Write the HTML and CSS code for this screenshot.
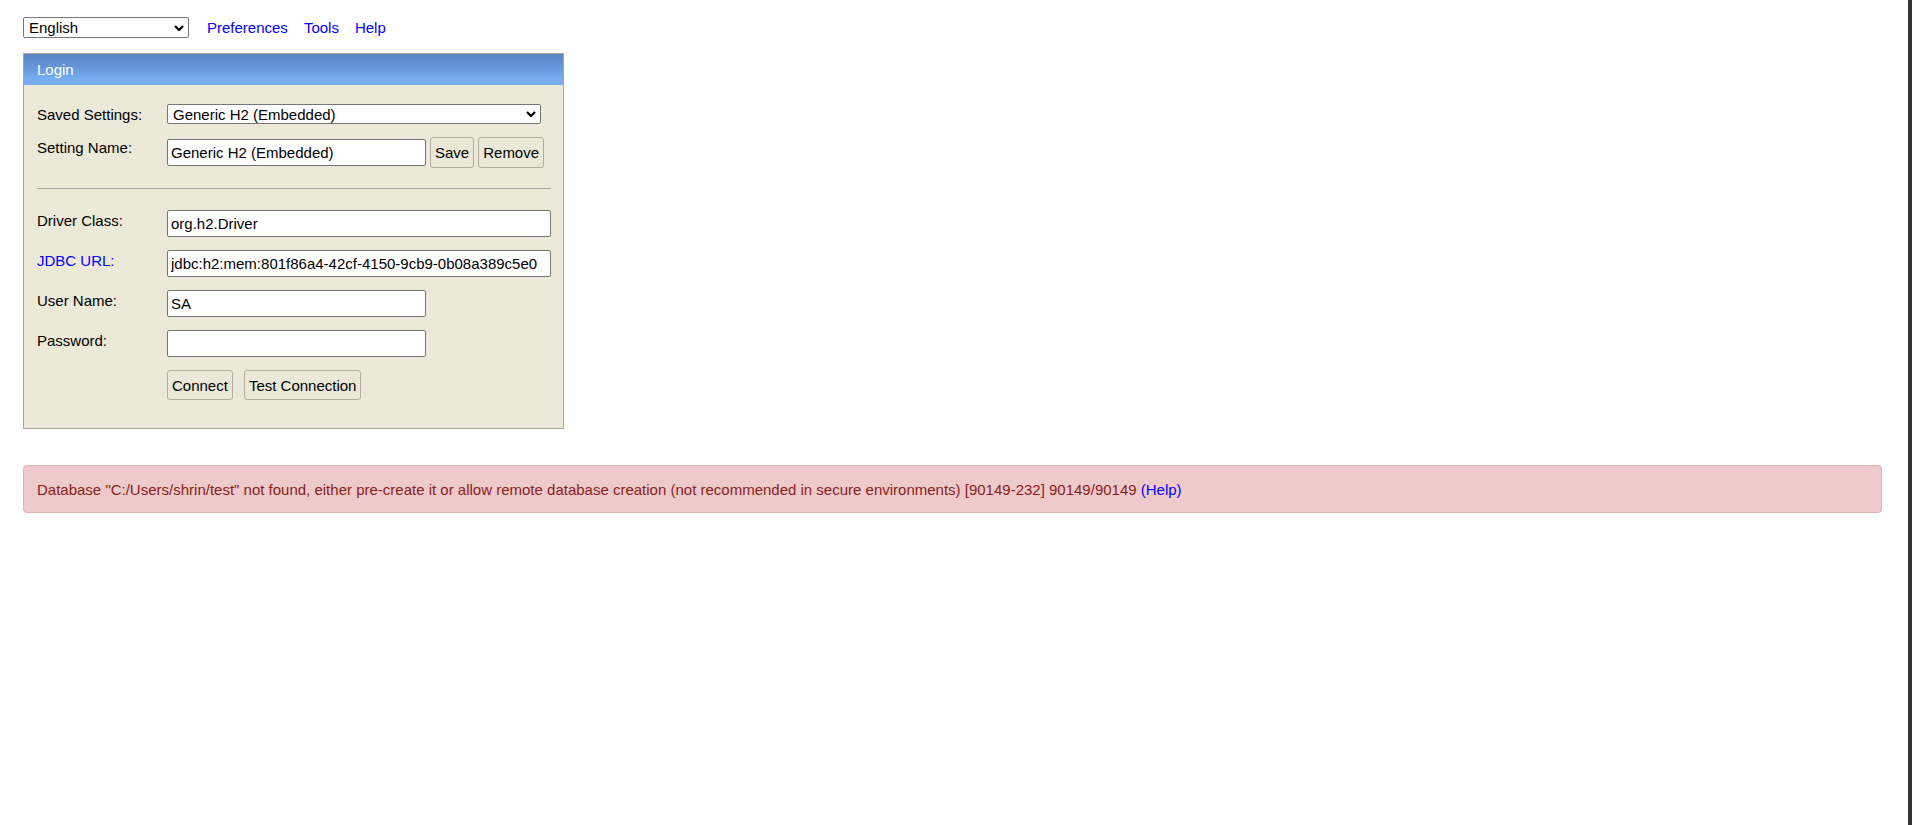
FILE: index.html
```html
<!DOCTYPE html>
<html lang="en">
<head>
<meta charset="utf-8">
<title>H2 Console</title>
<link rel="stylesheet" href="styles.css">
</head>
<body>
<div class="page">
  <div class="toolbar">
    <div class="select-wrap lang">
      <select class="select"><option>English</option></select>
      <svg class="chev" viewBox="0 0 10 6" aria-hidden="true"><path d="M1 1 L5 5 L9 1"/></svg>
    </div>
    <a class="link first" href="#">Preferences</a>
    <a class="link" href="#">Tools</a>
    <a class="link" href="#">Help</a>
  </div>

  <div class="login">
    <div class="login-head">Login</div>
    <div class="login-body">
      <div class="lbl">Saved Settings:</div>
      <div class="select-wrap saved">
        <select class="select"><option>Generic H2 (Embedded)</option></select>
        <svg class="chev" viewBox="0 0 10 6" aria-hidden="true"><path d="M1 1 L5 5 L9 1"/></svg>
      </div>

      <div class="lbl">Setting Name:</div>
      <div class="ctrls">
        <input class="input short" type="text" value="Generic H2 (Embedded)">
        <button class="btn tall">Save</button>
        <button class="btn tall">Remove</button>
      </div>

      <hr class="sep">

      <div class="lbl">Driver Class:</div>
      <div><input class="input wide" type="text" value="org.h2.Driver"></div>

      <div class="lbl"><a class="lbl-link" href="#">JDBC URL:</a></div>
      <div><input class="input wide" type="text" value="jdbc:h2:mem:801f86a4-42cf-4150-9cb9-0b08a389c5e0"></div>

      <div class="lbl">User Name:</div>
      <div><input class="input short" type="text" value="SA"></div>

      <div class="lbl">Password:</div>
      <div><input class="input short" type="password" value=""></div>

      <div class="actions">
        <button class="btn">Connect</button>
        <button class="btn">Test Connection</button>
      </div>
    </div>
  </div>

  <div class="error">Database "C:/Users/shrin/test" not found, either pre-create it or allow remote database creation (not recommended in secure environments) [90149-232] 90149/90149 <a class="err-link" href="#">(Help)</a></div>
</div>
<div class="edge"></div>
</body>
</html>
```

FILE: styles.css
```css
html, body {
  margin: 0;
  padding: 0;
  height: 100%;
}

body {
  display: flex;
  background: #ffffff;
  font-family: "Liberation Sans", Arial, sans-serif;
  font-size: 15px;
  color: #000000;
}

.page {
  flex: 1;
  padding: 17px 26px 0 23px;
}

.edge {
  flex: none;
  width: 4px;
  background: #333333;
}

/* top toolbar */
.toolbar {
  display: flex;
  align-items: center;
  height: 21px;
}

.link {
  color: #0000ff;
  text-decoration: none;
  margin-left: 16px;
  line-height: 17px;
}

.link.first {
  margin-left: 18px;
}

.select-wrap {
  position: relative;
  display: block;
}

.select {
  -webkit-appearance: none;
  appearance: none;
  display: block;
  box-sizing: border-box;
  margin: 0;
  padding: 0 0 0 5px;
  font: inherit;
  color: #000000;
  background: #ffffff;
  border: 1px solid #767676;
  border-radius: 2px;
}

.lang .select {
  width: 166px;
  height: 21px;
}

.saved {
  justify-self: start;
}

.saved .select {
  width: 374px;
  height: 20px;
}

.chev {
  position: absolute;
  right: 5px;
  top: 50%;
  width: 10px;
  height: 6px;
  margin-top: -3px;
  pointer-events: none;
  fill: none;
  stroke: #000000;
  stroke-width: 2.2;
}

/* login panel */
.login {
  box-sizing: border-box;
  width: 541px;
  margin-top: 15px;
  border: 1px solid #aca899;
  background: #ece9d8;
}

.login-head {
  height: 31px;
  line-height: 31px;
  padding-left: 13px;
  color: #ffffff;
  background: linear-gradient(#5a84c4 0%, #6697da 45%, #76aef1 80%, #75adf0 100%);
}

.login-body {
  display: grid;
  grid-template-columns: 130px 384px;
  row-gap: 13px;
  padding: 19px 12px 28px 13px;
}

.lbl {
  padding-top: 2px;
  line-height: 17px;
}

.lbl-link {
  color: #0000ff;
  text-decoration: none;
}

.ctrls {
  display: flex;
  align-items: center;
  gap: 4px;
}

.input {
  box-sizing: border-box;
  height: 27px;
  margin: 0;
  padding: 0 3px;
  font: inherit;
  color: #000000;
  background: #ffffff;
  border: 1px solid #767676;
  border-radius: 2px;
  display: block;
}

.input.wide {
  width: 384px;
}

.input.short {
  width: 259px;
}

.btn {
  box-sizing: border-box;
  height: 30px;
  margin: 0;
  padding: 0 4px;
  font: inherit;
  color: #000000;
  background: #ebe8d8;
  border: 1px solid #b1ae9f;
  border-radius: 3px;
}

.btn.tall {
  height: 31px;
}

.sep {
  grid-column: 1 / -1;
  height: 1px;
  margin: 7px 0 8px;
  border: 0;
  background: #a3a3a3;
}

.actions {
  grid-column: 2;
  display: flex;
  gap: 11px;
}

/* error message */
.error {
  margin-top: 36px;
  padding: 15px 13px 14px;
  line-height: 17px;
  color: #8b1c1c;
  background: #eecaca;
  border: 1px solid #e0b3b3;
  border-radius: 4px;
}

.err-link {
  color: #0000ff;
  text-decoration: none;
}
```
